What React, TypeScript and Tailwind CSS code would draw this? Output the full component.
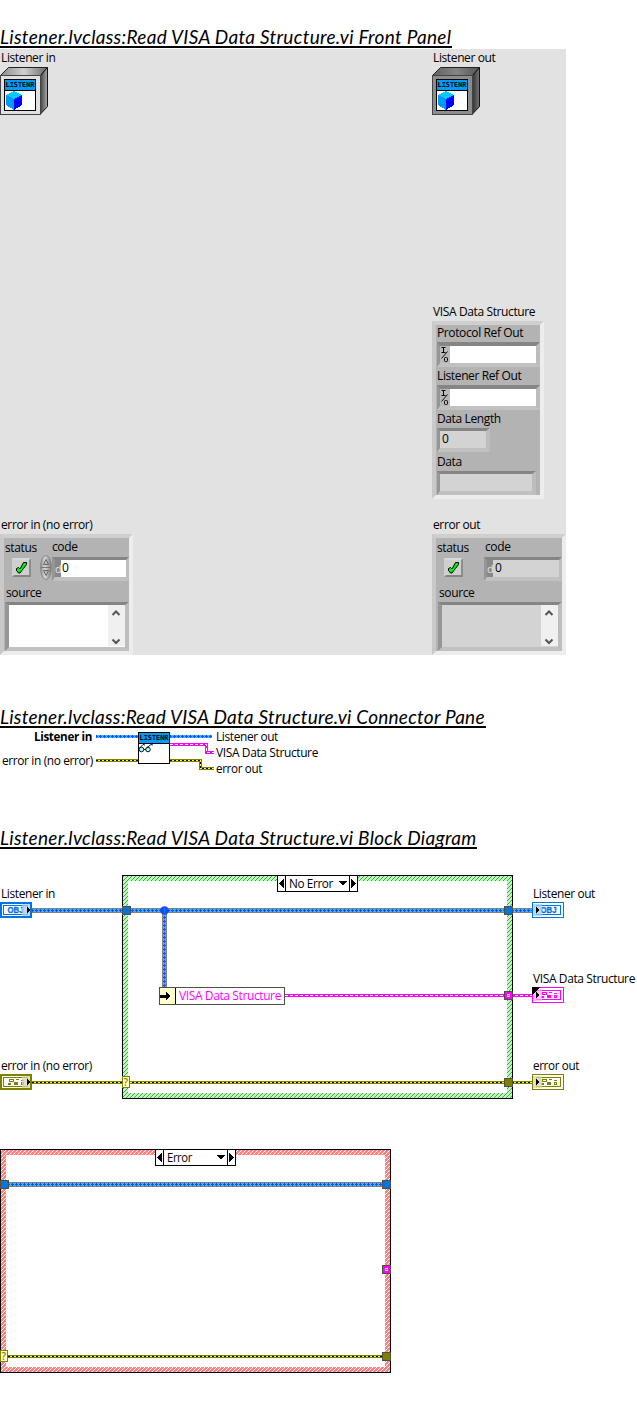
import type { ReactNode } from "react";

const SANS = "font-['Open_Sans','Noto_Sans',sans-serif]";

function Title({ children, className }: { children: ReactNode; className: string }) {
  return (
    <h2
      className={`h-[26px] overflow-hidden border-b-2 border-black font-['Lato',sans-serif] text-[19px] leading-[30px] whitespace-nowrap text-black italic ${className}`}
    >
      {children}
    </h2>
  );
}

function Label({ children, className = "" }: { children: ReactNode; className?: string }) {
  return (
    <div className={`h-4 whitespace-nowrap text-[12px] leading-4 tracking-[-0.38px] text-black ${SANS} ${className}`}>
      {children}
    </div>
  );
}

const SUNK = "border-t-[#858585] border-l-[#969696] border-r-[#bdbdbd] border-b-[#c1c1c1]";

function Cluster({ children, className = "" }: { children: ReactNode; className?: string }) {
  return (
    <div
      className={`border-4 border-t-[#cfcfcf] border-l-[#c9c9c9] border-r-[#ededed] border-b-[#ededed] bg-[#b3b3b3] ${className}`}
    >
      {children}
    </div>
  );
}

function T({ x, y, w, children, bold, fill = "#000" }: { x: number; y: number; w: number; children: string; bold?: boolean; fill?: string }) {
  return (
    <text
      x={x}
      y={y}
      textLength={w}
      lengthAdjust="spacingAndGlyphs"
      fill={fill}
      className={`text-[12px] tracking-[-0.38px] ${bold ? "font-bold" : ""} ${SANS}`}
    >
      {children}
    </text>
  );
}

function Banner({ x, y }: { x: number; y: number }) {
  return (
    <g>
      <rect x={x} y={y} width="32" height="32" fill="#000" />
      <rect x={x + 1} y={y + 1} width="30" height="10" fill="#0099ff" />
      <rect x={x + 1} y={y + 12} width="30" height="19" fill="#fff" />
      <text
        x={x + 1.5}
        y={y + 8}
        textLength="29"
        lengthAdjust="spacingAndGlyphs"
        className="font-['DejaVu_Sans_Mono',monospace] text-[7px] font-bold"
      >
        LISTENR
      </text>
    </g>
  );
}

function ObjectIcon({ dark }: { dark?: boolean }) {
  const id = dark ? "boxDark" : "boxLight";
  return (
    <svg width="48" height="48" viewBox="0 0 48 48" className="block">
      <defs>
        <linearGradient id={id + "t"} x1="0" x2="1">
          <stop offset="0" stopColor={dark ? "#606060" : "#8a8a8a"} />
          <stop offset="0.5" stopColor={dark ? "#858585" : "#d0d0d0"} />
          <stop offset="1" stopColor={dark ? "#555" : "#666"} />
        </linearGradient>
        <linearGradient id={id + "s"} x1="0" x2="1">
          <stop offset="0" stopColor={dark ? "#333" : "#444"} />
          <stop offset="1" stopColor={dark ? "#777" : "#aaa"} />
        </linearGradient>
      </defs>
      <path d="M.5 8.5 8.5.5H47.5L40.5 8.5Z" fill={`url(#${id}t)`} stroke="#222" />
      <path d="M40.5 8.5 47.5.5V39.5L40.5 47Z" fill={`url(#${id}s)`} stroke="#111" />
      <rect x=".5" y="8.5" width="40" height="39" fill={dark ? "#8c8c8c" : "#e0e0e0"} stroke="#444" />
      <Banner x={4} y={12} />
      <g shapeRendering="crispEdges">
        <path d="M6 28 14 24 22 28V38L14 43 6 38Z" fill="#0099ff" />
        <path d="M6 28 14 24 22 28 14 32Z" fill="#00ccff" />
        <path d="M14 32 22 28V38L14 43Z" fill="#0000ff" />
      </g>
    </svg>
  );
}

function RefField() {
  return (
    <div className={`flex h-[25px] w-[103px] border-4 border-l-[3px] ${SUNK} bg-white`}>
      <svg width="10" height="17" className="block bg-[#b9b9b9]">
        <path d="M1.5 1.5H5.5M3.5 1V7M1.5 6.5H5.5" stroke="#000" fill="none" />
        <rect x="4.5" y="11.5" width="3" height="4" rx="1" stroke="#000" fill="none" />
        <path d="M1.5 12.5 7.5 5.5" stroke="#000" strokeWidth=".9" />
      </svg>
    </div>
  );
}

function CheckBox() {
  return (
    <div className="h-[19px] w-[19px] border-2 border-t-[#d8d8d8] border-l-[#d0d0d0] border-r-[#8e8e8e] border-b-[#858585] bg-[#cfcfcf]">
      <svg width="15" height="15" viewBox="0 0 15 15" className="block">
        <path d="M2.5 8.5 4.5 7.5 6 9 9.5 2.5H12.5V4.5L7.5 11 6 13H4.5L2.5 10.5Z" fill="#00f200" stroke="#000" />
      </svg>
    </div>
  );
}

function Spinner() {
  return (
    <svg width="12" height="25" viewBox="0 0 12 25" className="block">
      <defs>
        <linearGradient id="spin" x1="0" x2="1">
          <stop offset="0" stopColor="#8b8b8b" />
          <stop offset="0.4" stopColor="#d8d8d8" />
          <stop offset="1" stopColor="#777" />
        </linearGradient>
      </defs>
      <ellipse cx="6" cy="12.5" rx="5.5" ry="12" fill="url(#spin)" stroke="#8a8a8a" />
      <path d="M1 12.5H11" stroke="#777" />
      <path d="M3.5 9.5 6 4.5 8.5 9.5ZM3.5 15.5 6 20.5 8.5 15.5Z" fill="#bbb" stroke="#555" strokeWidth=".8" />
    </svg>
  );
}

function SourceBox({ fill, className }: { fill: string; className: string }) {
  return (
    <div className={`flex h-[49px] shrink-0 justify-end border-4 border-t-[3px] ${SUNK} ${fill} ${className}`}>
      <svg width="17" height="41" className="block bg-[#f0f0f0]">
        <path d="M4.5 10 8 6.5 11.5 10M4.5 34.5 8 38 11.5 34.5" fill="none" stroke="#555" strokeWidth="2" />
      </svg>
    </div>
  );
}

function ErrorCluster({ out }: { out?: boolean }) {
  const fill = out ? "bg-[#d3d3d3]" : "bg-white";
  return (
    <Cluster className={`flex h-[121px] flex-col pl-px ${out ? "w-[134px]" : "w-[133px]"}`}>
      <div className="flex h-[47px] shrink-0">
        <div className={`pt-[2px] ${out ? "w-[47px]" : "w-[35px]"}`}>
          <Label>status</Label>
          <div className="pt-[2px] pl-[7px]">
            <CheckBox />
          </div>
        </div>
        {!out && (
          <div className="w-3 pt-[17px]">
            <Spinner />
          </div>
        )}
        <div className="pt-px">
          <Label className={out ? "pl-px" : ""}>code</Label>
          <div className="pt-[2px]">
            <div className={`flex h-6 border-[3px] border-b-4 ${SUNK} ${fill} ${out ? "w-[78px]" : "w-[77px]"}`}>
              <div className={`h-[17px] w-[6px] shrink-0 bg-[#888] text-[11px] leading-[17px] text-[#e4e4e4] ${SANS}`}>d</div>
              <Label className={out ? "pl-[2px]" : "pl-px"}>0</Label>
            </div>
          </div>
        </div>
      </div>
      <div className={`h-[17px] shrink-0 ${out ? "pl-[2px]" : "pl-px"}`}>
        <Label>source</Label>
      </div>
      <SourceBox fill={fill} className={out ? "ml-px w-[124px]" : "w-[124px]"} />
    </Cluster>
  );
}

function FrontPanel() {
  return (
    <section className="flex h-[606px] w-[566px] bg-[#e2e2e2]">
      <div className="flex w-[432px] flex-col">
        <div className="pt-px pl-px">
          <Label>Listener in</Label>
        </div>
        <div className="pt-px">
          <ObjectIcon />
        </div>
        <div className="mt-auto pb-px pl-px">
          <Label>error in (no error)</Label>
        </div>
        <ErrorCluster />
      </div>
      <div className="flex w-[134px] flex-col">
        <div className="pt-px pl-px">
          <Label>Listener out</Label>
        </div>
        <div className="pt-px">
          <ObjectIcon dark />
        </div>
        <div className="pt-[189px] pl-px">
          <Label>VISA Data Structure</Label>
        </div>
        <Cluster className="mt-px flex h-[178px] w-[112px] flex-col pl-px">
          <Label>Protocol Ref Out</Label>
          <div className="h-[27px] pt-px">
            <RefField />
          </div>
          <Label>Listener Ref Out</Label>
          <div className="h-[27px] pt-px">
            <RefField />
          </div>
          <Label>Data Length</Label>
          <div className="h-[27px] pt-px">
            <div className={`h-6 w-[53px] border-[3px] border-r-4 border-b-4 ${SUNK} bg-[#d3d3d3] pl-[2px]`}>
              <Label>0</Label>
            </div>
          </div>
          <Label>Data</Label>
          <div className="pt-px">
            <div className={`h-6 w-[99px] border-[3px] border-r-4 border-b-4 ${SUNK} bg-[#d3d3d3]`} />
          </div>
        </Cluster>
        <div className="mt-auto pb-px pl-px">
          <Label>error out</Label>
        </div>
        <ErrorCluster out />
      </div>
    </section>
  );
}

function ErrorWire({ d }: { d: string }) {
  return (
    <g fill="none">
      <path d={d} stroke="#808000" strokeWidth="3" />
      <path d={d} stroke="#ffff00" />
      <path d={d} stroke="#000" strokeDasharray="2 2" />
    </g>
  );
}

function ClusterWire({ d }: { d: string }) {
  return (
    <g fill="none">
      <path d={d} stroke="#ff00ff" strokeWidth="3" />
      <path d={d} stroke="#fff" strokeDasharray="3 2" />
    </g>
  );
}

function ObjectWire({ d, thin }: { d: string; thin?: boolean }) {
  return (
    <g fill="none">
      {!thin && <path d={d} stroke="#808080" strokeWidth="5" />}
      <path d={d} stroke="#33bbff" strokeWidth="3" />
      <path d={d} stroke="#1a4dff" strokeWidth="3" strokeDasharray="1 3" />
      <path d={d} stroke="#1a4dff" strokeDasharray="3 1" strokeDashoffset="1" />
    </g>
  );
}

function ConnectorPane() {
  return (
    <svg width="637" height="60" viewBox="0 728 637 60" className="block">
      <g shapeRendering="crispEdges">
        <ObjectWire thin d="M96 736.5H138" />
        <ObjectWire thin d="M170 736.5H212" />
        <ClusterWire d="M170 744.5H206.5V752.5H214" />
        <ErrorWire d="M96 760.5H138" />
        <ErrorWire d="M170 760.5H200.5V768.5H214" />
      </g>
      <Banner x={138} y={732} />
      <g fill="#9ff" stroke="#000" strokeWidth=".9">
        <circle cx="141.5" cy="749.5" r="2.3" />
        <circle cx="148" cy="749.5" r="2.3" />
        <path d="M139.5 748 143 744.5 145 745M146.5 748 151 744.5 153 745M144 749.5H146" fill="none" />
      </g>
      <T x={34} y={741} w={58} bold>Listener in</T>
      <T x={2} y={765} w={91}>error in (no error)</T>
      <T x={216} y={741} w={62}>Listener out</T>
      <T x={216} y={757} w={102}>VISA Data Structure</T>
      <T x={216} y={773} w={46}>error out</T>
    </svg>
  );
}

function Terminal({ x, y, color, pale, obj, control, corner }: { x: number; y: number; color: string; pale: string; obj?: boolean; control?: boolean; corner?: boolean }) {
  return (
    <g transform={`translate(${x} ${y})`} shapeRendering="crispEdges">
      <rect width="32" height="16" fill={color} />
      {control ? (
        <>
          <rect x="2" y="2" width="28" height="12" fill="#fff" />
          <rect x="3.5" y="3.5" width="24" height="9" fill="#fff" stroke={color} />
        </>
      ) : (
        <>
          <rect x="1" y="1" width="30" height="14" fill="#fff" />
          <rect x="4.5" y="3.5" width="24" height="9" fill="#fff" stroke={color} />
        </>
      )}
      {obj ? (
        <text
          x={control ? 7.5 : 8.5}
          y="11"
          textLength="16"
          lengthAdjust="spacingAndGlyphs"
          fill={color}
          stroke={color}
          strokeWidth=".3"
          className="font-['Liberation_Sans',sans-serif] text-[8.5px] font-bold"
        >
          OBJ
        </text>
      ) : (
        <g transform={control ? "translate(0 0)" : "translate(1 0)"} stroke={color} fill="none">
          <rect x="9.5" y="5.5" width="4" height="2" />
          <path d="M16 5.5H19M21 6.5H24" />
          <rect x="8" y="9" width="3" height="2" fill={color} stroke="none" />
          <rect x="14" y="8" width="4" height="3" fill={color} stroke="none" />
          <rect x="21.5" y="8.5" width="2" height="2" />
        </g>
      )}
      <rect x={control ? 22 : 1} y="2" width={control ? 8 : 9} height="12" fill={pale} opacity="0.75" />
      {control ? <path d="M27 5V11L30 8Z" fill="#000" /> : <path d="M4 5V11L7 8Z" fill="#000" />}
      {corner && <path d="M0 0H8L0 8Z" fill="#000" />}
    </g>
  );
}

function Tunnel({ x, y, color, hollow }: { x: number; y: number; color: string; hollow?: boolean }) {
  return (
    <g shapeRendering="crispEdges">
      <rect x={x + 0.5} y={y + 0.5} width="8" height="8" fill={color} stroke="#505040" />
      {hollow && <rect x={x + 3.5} y={y + 3.5} width="2" height="2" fill={color} stroke="#fff" />}
    </g>
  );
}

function Selector({ x, y }: { x: number; y: number }) {
  return (
    <g transform={`translate(${x} ${y})`} shapeRendering="crispEdges">
      <rect x=".5" y=".5" width="80" height="16" fill="#fff" stroke="#000" />
      <path d="M8.5 0V17M72.5 0V17" stroke="#000" />
      <path d="M7 4V13L2 8.5ZM74 4V13L79 8.5ZM62 6H70L66 10.5Z" fill="#000" />
    </g>
  );
}

function CaseFrame({ x, y, pattern }: { x: number; y: number; pattern: string }) {
  return (
    <g shapeRendering="crispEdges">
      <rect x={x} y={y} width="391" height="224" fill="#000" />
      <rect x={x + 1} y={y + 1} width="389" height="222" fill={`url(#${pattern})`} />
      <rect x={x + 6} y={y + 6} width="379" height="212" fill="#fff" />
    </g>
  );
}

function Condition({ x, y }: { x: number; y: number }) {
  return (
    <g>
      <rect x={x + 0.5} y={y + 0.5} width="7" height="11" fill="#ffffcc" stroke="#808000" />
      <text x={x + 1.5} y={y + 9.5} fill="#808000" className={`text-[10px] font-semibold ${SANS}`}>
        ?
      </text>
    </g>
  );
}

const BLUE = "#0074e0";

function BlockDiagram() {
  return (
    <svg width="637" height="574" viewBox="0 849 637 574" className="block">
      <defs>
        <pattern id="hatchGreen" width="4" height="4" patternUnits="userSpaceOnUse" shapeRendering="crispEdges">
          <rect width="4" height="4" fill="#b3ffb3" />
          <path d="M3 0h1v1h-1zM2 1h1v1h-1zM1 2h1v1h-1zM0 3h1v1h-1z" fill="#668f66" />
        </pattern>
        <pattern id="hatchRed" width="4" height="4" patternUnits="userSpaceOnUse" shapeRendering="crispEdges">
          <rect width="4" height="4" fill="#ff8080" />
          <path d="M3 0h1v1h-1zM2 1h1v1h-1zM1 2h1v1h-1zM0 3h1v1h-1z" fill="#fff" />
        </pattern>
      </defs>
      <CaseFrame x={122} y={875} pattern="hatchGreen" />
      <CaseFrame x={0} y={1149} pattern="hatchRed" />
      <g shapeRendering="crispEdges">
        <ObjectWire d="M32 910.5H532" />
        <ObjectWire d="M164.5 913V988" />
        <ClusterWire d="M285 995.5H532" />
        <ErrorWire d="M32 1082.5H532" />
        <ObjectWire d="M8 1184.5H383" />
        <ErrorWire d="M8 1356.5H383" />
      </g>
      <circle cx="164.5" cy="910.5" r="4.3" fill="#1a4dff" />
      <path d="M164.5 908V913" stroke="#0080ff" />
      <Tunnel x={122} y={906} color={BLUE} />
      <Tunnel x={504} y={906} color={BLUE} />
      <Tunnel x={504} y={991} color="#ff00ff" hollow />
      <Tunnel x={504} y={1078} color="#808000" />
      <Condition x={122} y={1076} />
      <Tunnel x={0} y={1180} color={BLUE} />
      <Tunnel x={382} y={1180} color={BLUE} />
      <Tunnel x={382} y={1265} color="#ff00ff" hollow />
      <Tunnel x={382} y={1352} color="#808000" />
      <Condition x={0} y={1350} />
      <Selector x={277} y={875} />
      <Selector x={155} y={1149} />
      <g shapeRendering="crispEdges">
        <rect x="159.5" y="987.5" width="125" height="17" fill="#fff" stroke="#505040" />
        <rect x="160" y="988" width="15" height="16" fill="#ffffcc" />
        <path d="M175.5 988V1004" stroke="#000" />
        <path d="M160 995H166V992L170.5 996 166 1000V997.5H160Z" fill="#000" />
      </g>
      <Terminal x={0} y={902} color={BLUE} pale="#a6cdf5" obj control />
      <Terminal x={532} y={902} color={BLUE} pale="#a6cdf5" obj />
      <Terminal x={532} y={987} color="#ff00ff" pale="#ffb0ff" corner />
      <Terminal x={0} y={1074} color="#808000" pale="#d6d6a8" control />
      <Terminal x={532} y={1074} color="#808000" pale="#d6d6a8" />
      <T x={1} y={898} w={54}>Listener in</T>
      <T x={533} y={898} w={62}>Listener out</T>
      <T x={533} y={983} w={102}>VISA Data Structure</T>
      <T x={1} y={1070} w={91}>error in (no error)</T>
      <T x={533} y={1070} w={46}>error out</T>
      <T x={179} y={1000} w={102} fill="#ff00ff">VISA Data Structure</T>
      <T x={289} y={888} w={44}>No Error</T>
      <T x={167} y={1162} w={25}>Error</T>
    </svg>
  );
}

export default function App() {
  return (
    <main className="flex h-[1423px] w-[637px] flex-col bg-white pt-[22px]">
      <Title className="w-[452px] tracking-[0.29px]">Listener.lvclass:Read VISA Data Structure.vi Front Panel</Title>
      <div className="pt-px">
        <FrontPanel />
      </div>
      <div className="pt-[47px]">
        <Title className="w-[486px] tracking-[0.24px]">Listener.lvclass:Read VISA Data Structure.vi Connector Pane</Title>
      </div>
      <ConnectorPane />
      <div className="pt-[35px]">
        <Title className="w-[477px] tracking-[0.28px]">Listener.lvclass:Read VISA Data Structure.vi Block Diagram</Title>
      </div>
      <BlockDiagram />
    </main>
  );
}
